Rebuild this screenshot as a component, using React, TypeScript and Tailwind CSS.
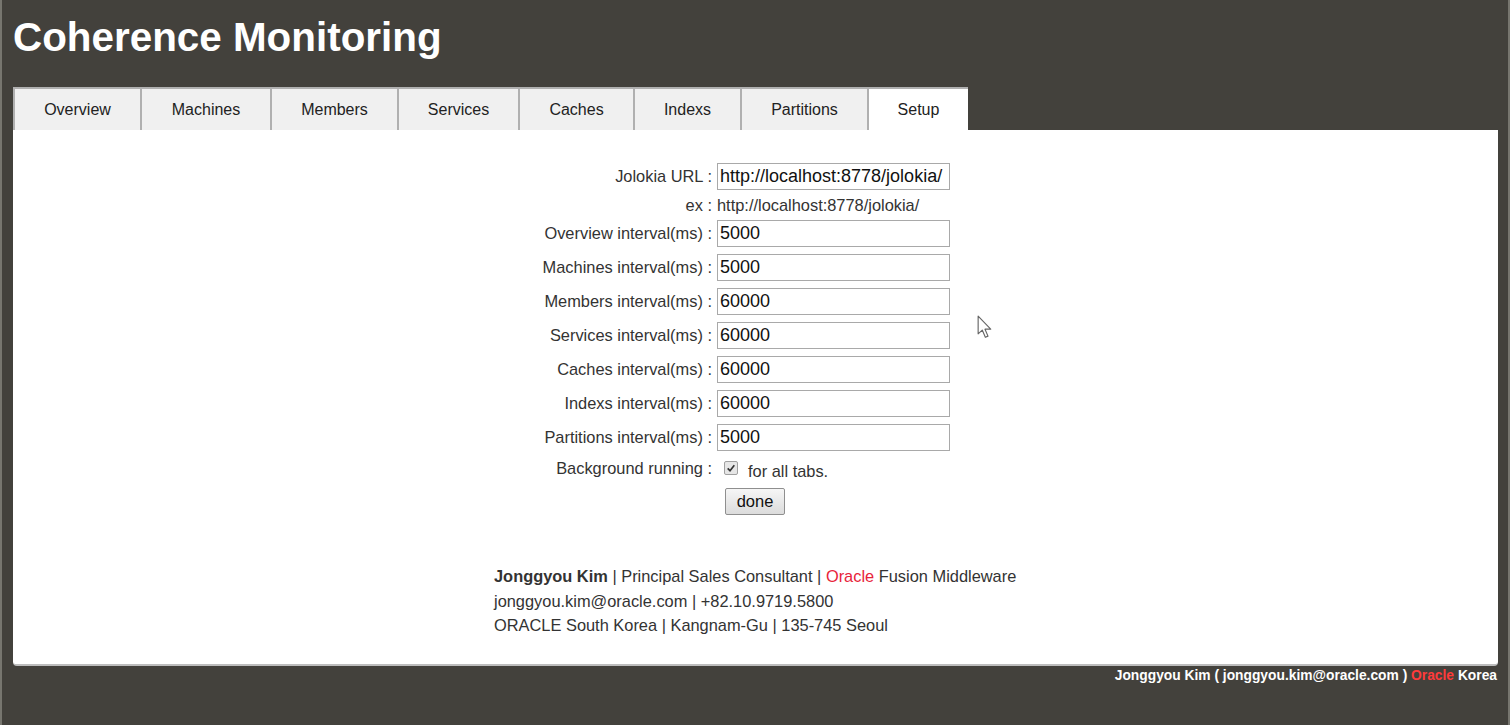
const tabs = [
  { name: "Overview", w: "w-[127px]" },
  { name: "Machines", w: "w-[130px]" },
  { name: "Members", w: "w-[127px]" },
  { name: "Services", w: "w-[121px]" },
  { name: "Caches", w: "w-[115px]" },
  { name: "Indexs", w: "w-[107px]" },
  { name: "Partitions", w: "w-[127px]" },
  { name: "Setup", w: "w-[101px]", active: true },
];

const intervals = [
  { label: "Overview interval(ms) :", value: "5000" },
  { label: "Machines interval(ms) :", value: "5000" },
  { label: "Members interval(ms) :", value: "60000" },
  { label: "Services interval(ms) :", value: "60000" },
  { label: "Caches interval(ms) :", value: "60000" },
  { label: "Indexs interval(ms) :", value: "60000" },
  { label: "Partitions interval(ms) :", value: "5000" },
];

function TextBox(props: any) {
  return (
    <input
      type="text"
      defaultValue={props.value}
      className="h-[27px] w-[233px] border border-[#a9a9a9] bg-white px-[2px] text-[18px] text-[#111] outline-none"
    />
  );
}

export default function App() {
  return (
    <div
      className="relative min-h-[725px] border-x-2 border-[#77766f] bg-[#43413c] pl-[11px] pr-[10px]"
      style={{ fontFamily: '"Liberation Sans", Arial, sans-serif' }}
    >
      <h1 className="pt-[14px] text-[40.4px] font-bold leading-[46px] text-white">Coherence Monitoring</h1>

      {/* tabs */}
      <div className="mt-[27px] flex">
        {tabs.map((tab, index) => (
          <div
            key={index}
            className={
              tab.w +
              " flex h-[43px] items-center justify-center border-l-2 border-t-2 border-[#b0b0b0] text-[16px] text-[#222] " +
              (tab.active ? "bg-white" : "bg-[#f0f0f0]")
            }
          >
            {tab.name}
          </div>
        ))}
      </div>

      {/* panel */}
      <div className="rounded-b-[4px] border-b-2 border-[#bdbdbd] bg-white pt-[33px] pb-[26px] text-[16.4px] text-[#333]">
        <div className="grid grid-cols-[699px_233px] items-center gap-x-[5px] gap-y-[7px]">
          <div className="text-right">Jolokia URL :</div>
          <TextBox value="http://localhost:8778/jolokia/" />

          <div className="text-right leading-[16px]">ex :</div>
          <div className="leading-[16px]">http://localhost:8778/jolokia/</div>

          {intervals.map((row, index) => (
            <div key={index} className="contents">
              <div className="text-right">{row.label}</div>
              <TextBox value={row.value} />
            </div>
          ))}

          <div className="h-[20px] text-right leading-[20px]">Background running :</div>
          <div className="flex h-[20px] items-center">
            <span className="ml-[7px] flex h-[14px] w-[14px] items-center justify-center rounded-[2px] border border-[#a0a0a0] bg-[#e6e6e6]">
              <svg viewBox="0 0 12 12" className="h-[10px] w-[10px]">
                <path d="M2 6.5 L4.8 9.2 L10 2.8" fill="none" stroke="#333" strokeWidth="2" />
              </svg>
            </span>
            <span className="ml-[10px] mt-[6px]">for all tabs.</span>
          </div>

          <div />
          <div className="pt-[3px]">
            <button className="ml-[8px] h-[27px] w-[60px] rounded-[2px] border border-[#8f8f8f] bg-gradient-to-b from-[#f6f6f6] to-[#dcdcdc] text-[16.5px] text-[#111]">
              done
            </button>
          </div>
        </div>

        <div className="mt-[49px] flex justify-center">
          <div className="w-[523px] leading-[24.5px]">
            <div>
              <b>Jonggyou Kim</b> | Principal Sales Consultant | <span className="text-[#e8233a]">Oracle</span> Fusion Middleware
            </div>
            <div>jonggyou.kim@oracle.com | +82.10.9719.5800</div>
            <div>ORACLE South Korea | Kangnam-Gu | 135-745 Seoul</div>
          </div>
        </div>
      </div>

      <div className="pt-[2px] pr-[1px] text-right text-[13.8px] font-bold leading-[16px] text-white">
        Jonggyou Kim ( jonggyou.kim@oracle.com ) <span className="text-[#ff3b3b]">Oracle</span> Korea
      </div>

      {/* mouse pointer */}
      <svg viewBox="0 0 14 21" className="absolute left-[975px] top-[315px] h-[24px] w-[16px]">
        <path d="M1 1 L1 16.5 L4.6 13.2 L7.3 19.5 L9.6 18.5 L7 12.4 L12 12.4 Z" fill="white" stroke="#666" strokeWidth="1" strokeLinejoin="round" />
      </svg>
    </div>
  );
}
